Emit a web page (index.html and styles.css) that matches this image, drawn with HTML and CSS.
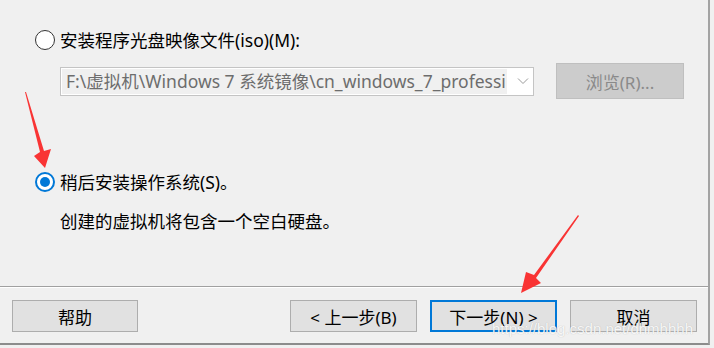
FILE: index.html
```html
<!DOCTYPE html>
<html lang="zh-CN">
<head>
    <meta charset="UTF-8">
    <meta name="viewport" content="width=device-width, initial-scale=1.0">
    <title>新建虚拟机向导</title>
    <link rel="stylesheet" href="styles.css">
</head>
<body>
    <div class="dialog">
        <div class="content">
            <!-- ISO option -->
            <div class="option first">
                <span class="radio"></span>
                <span class="label">安装程序光盘映像文件(iso)(M):</span>
            </div>
            <div class="iso-row">
                <div class="combo">
                    <span class="combo-text">F:\虚拟机\Windows 7 系统镜像\cn_windows_7_professi</span>
                    <svg class="combo-arrow" width="12" height="8" viewBox="0 0 12 8">
                        <path d="M1 1.5 L6 6.5 L11 1.5" fill="none" stroke="#9a9a9a" stroke-width="1"/>
                    </svg>
                </div>
                <button class="btn btn-disabled">浏览(R)...</button>
            </div>

            <!-- install later -->
            <div class="option second">
                <span class="radio checked"></span>
                <span class="label">稍后安装操作系统(S)。</span>
            </div>
            <p class="desc">创建的虚拟机将包含一个空白硬盘。</p>
        </div>

        <div class="separator"></div>

        <div class="footer">
            <button class="btn">帮助</button>
            <div class="nav">
                <button class="btn">&lt; 上一步(B)</button>
                <button class="btn btn-default">下一步(N) &gt;</button>
                <button class="btn">取消</button>
            </div>
        </div>
    </div>

    <!-- red annotation arrows drawn on top of the screenshot -->
    <svg class="arrows" width="714" height="348" viewBox="0 0 714 348">
        <path d="M25 92 L40 152 L34 156 L45 168 L51 149 L44 151 L26 92 Z" fill="#f93434"/>
        <path d="M578 215 L534 275 L526 272 L521 293 L541 283 L536 278 L579 216 Z" fill="#f93434"/>
    </svg>
    <div class="watermark">https://blog.csdn.net/dhmhhhh</div>
</body>
</html>
```
FILE: styles.css
```css
body {
    margin: 0;
    background-color: #f0f0f0;
    font-family: "Noto Sans", "Noto Sans CJK SC", sans-serif;
    font-size: 17.5px;
    color: #000;
    position: relative;
    width: 714px;
    height: 348px;
    overflow: hidden;
}
.dialog {
    width: 708px;
    height: 343px;
    border-right: 2px solid #a3a3a3;
    border-bottom: 2px solid #8c8c8c;
    display: flex;
    flex-direction: column;
}
.content {
    padding-left: 35px;
}
.option {
    display: flex;
    align-items: center;
    gap: 5px;
    height: 24px;
    line-height: 24px;
}
.option.first {
    margin-top: 28px;
}
.option.second {
    margin-top: 71px;
}
.radio {
    width: 20px;
    height: 20px;
    box-sizing: border-box;
    border: 1.5px solid #333;
    border-radius: 50%;
    background: #fff;
    display: flex;
    align-items: center;
    justify-content: center;
}
.radio.checked {
    border: 2px solid #0078d7;
}
.radio.checked::after {
    content: "";
    width: 10px;
    height: 10px;
    border-radius: 50%;
    background: #0078d7;
}
.iso-row {
    display: flex;
    align-items: center;
    gap: 22px;
    margin-top: 11px;
    margin-left: 25px;
}
.combo {
    width: 474px;
    height: 29px;
    box-sizing: border-box;
    border: 1px solid #c4c4c4;
    background: #fff;
    display: flex;
    align-items: center;
    padding: 1px;
}
.combo-text {
    background: #f0f0f0;
    color: #6d6d6d;
    height: 25px;
    line-height: 25px;
    padding-left: 4px;
    width: 441px;
    white-space: nowrap;
    overflow: hidden;
}
.combo-arrow {
    margin-left: 10px;
}
.desc {
    margin: 15px 0 0 25px;
    line-height: 24px;
}
.separator {
    margin-top: 53px;
    border-top: 1px solid #a0a0a0;
    border-bottom: 1px solid #fff;
}
.footer {
    display: flex;
    justify-content: space-between;
    padding: 12px 11px 0 12px;
}
.nav {
    display: flex;
    gap: 13px;
}
.btn {
    width: 127px;
    height: 32px;
    box-sizing: border-box;
    border: 1px solid #adadad;
    background-color: #e1e1e1;
    font-family: inherit;
    font-size: 17px;
    color: #000;
    padding: 0;
}
.footer > .btn {
    width: 126px;
}
.btn-default {
    border: 2px solid #0078d7;
}
.btn-disabled {
    width: 128px;
    height: 36px;
    background-color: #cccccc;
    border-color: #bfbfbf;
    color: #8a8a8a;
}
.arrows {
    position: absolute;
    left: 0;
    top: 0;
}
.watermark {
    position: absolute;
    left: 492px;
    top: 320px;
    font-family: "Liberation Sans", Arial, sans-serif;
    font-size: 15px;
    color: rgba(255, 255, 255, 0.9);
    text-shadow: 0 0 1px rgba(100, 100, 100, 0.4);
}
```
